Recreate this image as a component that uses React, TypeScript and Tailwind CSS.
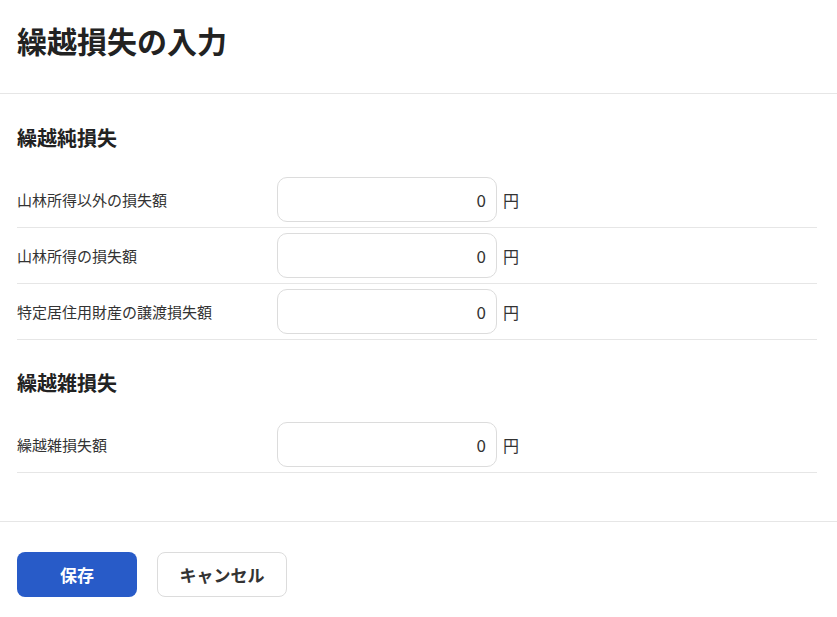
const font = "font-['Noto_Sans_CJK_JP','Noto_Sans',sans-serif]";

type Field = { label: string; value: string };

const sections: { title: string; fields: Field[] }[] = [
  {
    title: "繰越純損失",
    fields: [
      { label: "山林所得以外の損失額", value: "0" },
      { label: "山林所得の損失額", value: "0" },
      { label: "特定居住用財産の譲渡損失額", value: "0" },
    ],
  },
  {
    title: "繰越雑損失",
    fields: [{ label: "繰越雑損失額", value: "0" }],
  },
];

function AmountRow({ label, value }: Field) {
  return (
    <div className="flex items-center border-b border-[#e6e6e6] py-[5px]">
      <label className="w-[260px] text-[15px] leading-none text-[#333]">{label}</label>
      <input
        readOnly
        value={value}
        className="h-[45px] w-[220px] rounded-[10px] border border-[#dcdcdc] bg-white px-[10px] text-right text-[17px] text-[#333] outline-none"
      />
      <span className="ml-[6px] text-[16px] text-[#333]">円</span>
    </div>
  );
}

export default function App() {
  return (
    <div className={`${font} min-h-screen bg-white text-[#222]`}>
      <header className="border-b border-[#e6e6e6] px-[17px] pt-[18px] pb-[30px]">
        <h1 className="text-[30px] font-bold leading-[45px] text-[#222]">繰越損失の入力</h1>
      </header>

      <main className="pl-[17px] pr-[20px] pb-[48px]">
        {sections.map((s, i) => (
          <section key={s.title} className={i === 0 ? "pt-[29px]" : "pt-[28px]"}>
            <h2 className="mb-[19px] text-[20px] font-bold leading-[30px] text-[#222]">{s.title}</h2>
            {s.fields.map((f) => (
              <AmountRow key={f.label} {...f} />
            ))}
          </section>
        ))}
      </main>

      <footer className="flex gap-[20px] border-t border-[#e6e6e6] px-[17px] pt-[30px]">
        <button className="h-[45px] w-[120px] rounded-[8px] bg-[#285bc8] text-[17px] font-bold text-white">
          保存
        </button>
        <button className="h-[45px] w-[130px] rounded-[8px] border border-[#dcdcdc] bg-white text-[17px] font-bold text-[#333]">
          キャンセル
        </button>
      </footer>
    </div>
  );
}
